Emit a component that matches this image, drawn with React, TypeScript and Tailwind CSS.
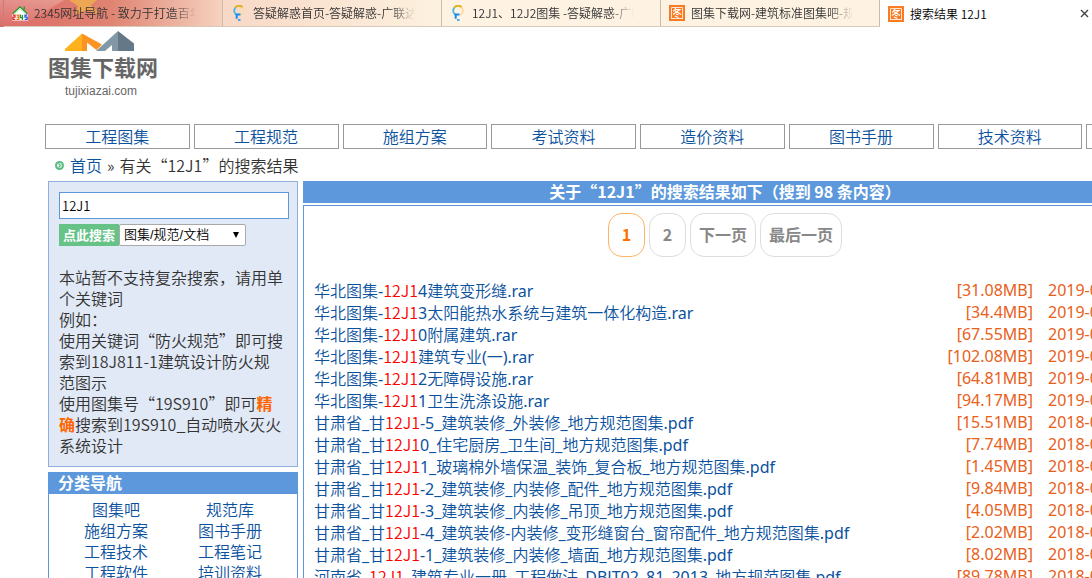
const navItems = ['工程图集', '工程规范', '施组方案', '考试资料', '造价资料', '图书手册', '技术资料', '下载排行'];

const categories = ['图集吧', '规范库', '施组方案', '图书手册', '工程技术', '工程笔记', '工程软件', '培训资料'];

const keyword = '12J1';

const results = [
  { name: '华北图集-12J14建筑变形缝.rar', size: '31.08MB', date: '2019-05-12' },
  { name: '华北图集-12J13太阳能热水系统与建筑一体化构造.rar', size: '34.4MB', date: '2019-05-12' },
  { name: '华北图集-12J10附属建筑.rar', size: '67.55MB', date: '2019-05-12' },
  { name: '华北图集-12J1建筑专业(一).rar', size: '102.08MB', date: '2019-05-12' },
  { name: '华北图集-12J12无障碍设施.rar', size: '64.81MB', date: '2019-05-12' },
  { name: '华北图集-12J11卫生洗涤设施.rar', size: '94.17MB', date: '2019-05-12' },
  { name: '甘肃省_甘12J1-5_建筑装修_外装修_地方规范图集.pdf', size: '15.51MB', date: '2018-08-20' },
  { name: '甘肃省_甘12J10_住宅厨房_卫生间_地方规范图集.pdf', size: '7.74MB', date: '2018-08-20' },
  { name: '甘肃省_甘12J11_玻璃棉外墙保温_装饰_复合板_地方规范图集.pdf', size: '1.45MB', date: '2018-08-20' },
  { name: '甘肃省_甘12J1-2_建筑装修_内装修_配件_地方规范图集.pdf', size: '9.84MB', date: '2018-08-20' },
  { name: '甘肃省_甘12J1-3_建筑装修_内装修_吊顶_地方规范图集.pdf', size: '4.05MB', date: '2018-08-20' },
  { name: '甘肃省_甘12J1-4_建筑装修-内装修_变形缝窗台_窗帘配件_地方规范图集.pdf', size: '2.02MB', date: '2018-08-20' },
  { name: '甘肃省_甘12J1-1_建筑装修_内装修_墙面_地方规范图集.pdf', size: '8.02MB', date: '2018-08-20' },
  { name: '河南省_12J1_建筑专业一册_工程做法_DBJT02_81_2013_地方规范图集.pdf', size: '89.78MB', date: '2018-08-20' },
];

function HouseIcon() {
  return (
    <svg viewBox="0 0 17 16" className="h-4 w-4 shrink-0" aria-hidden="true">
      <path d="M2 10v-3l6.500-5 6.500 5v3z" fill="#fff" />
      <path d="M1 8.500 8.500 1.500 16 8.500M13 1v3.500" fill="none" stroke="#1d9a2b" strokeWidth="1.300" />
      <path d="M3 8.500 8.500 3.500 14 8.500" fill="none" stroke="#9be08a" strokeWidth="1" />
      <rect x="0" y="9.500" width="17" height="6.500" fill="#fff" />
      <g fill="none" strokeWidth="1.300">
        <path d="M.8 10.200h2.400v2.300H.9v2.300h2.500" stroke="#e02020" />
        <path d="M4.700 10.200h2.600v4.600H4.700M5 12.500h2" stroke="#e87818" />
        <path d="M9 9.700v3.300h3M11 10v5.500" stroke="#1f9a38" />
        <path d="M16.300 10.200h-2.500v2.300h2.300v2.300h-2.600" stroke="#2450d0" />
      </g>
    </svg>
  );
}

function SwirlIcon() {
  return (
    <svg viewBox="0 0 16 16" className="h-4 w-4 shrink-0" fill="none" aria-hidden="true">
      <path d="M4.200 2.800A4.700 4.700 0 0 1 11.500 2.200" stroke="#e0b020" strokeWidth="2" />
      <path d="M11.500 2.200a4.700 4.700 0 0 1-1.500 7.600" stroke="#f8dca6" strokeWidth="2" />
      <path d="M4.200 2.800A4.700 4.700 0 0 0 5 9.300" stroke="#4ab8e0" strokeWidth="2" />
      <path d="M4.500 9.500h5M5.700 9v4.700" stroke="#0f8df0" strokeWidth="2" />
      <path d="M7 15h2.500" stroke="#0f8df0" strokeWidth="1.500" />
    </svg>
  );
}

function AtlasIcon() {
  return (
    <svg viewBox="0 0 16 16" className="h-4 w-4 shrink-0" fill="none" aria-hidden="true">
      <rect width="16" height="16" fill="#fb7b22" />
      <path d="M2.500 14V2.500h11V14M2.500 13.500h11" stroke="#fff" strokeOpacity=".8" strokeWidth="1" />
      <path d="M7 3 4.200 6.500M6 4.500h4.800L4 9.500M5.800 5.500l6.200 4M7 9l2.500 1M5.800 11l3.700 1.500" stroke="#fff" strokeWidth="1.200" />
    </svg>
  );
}

const tabs = [
  { icon: <HouseIcon />, title: '2345网址导航 - 致力于打造百年品牌', tint: '' },
  { icon: <SwirlIcon />, title: '答疑解惑首页-答疑解惑-广联达服务', tint: 'bg-linear-to-r from-[#f8d8c6] to-[#fdf1df]' },
  { icon: <SwirlIcon />, title: '12J1、12J2图集 -答疑解惑-广联达', tint: 'bg-[#fef3e2]' },
  { icon: <AtlasIcon />, title: '图集下载网-建筑标准图集吧-规范下载', tint: 'bg-[#fef3e2]' },
];

function TabBar() {
  return (
    <div className="relative isolate flex h-[27px] bg-white text-xs text-[#333]">
      <svg viewBox="0 0 223 27" className="absolute top-0 left-0 -z-10 h-[27px] w-[223px]" aria-hidden="true">
        <defs>
          <linearGradient id="flag">
            <stop offset="0" stopColor="#dc6a66" />
            <stop offset=".5" stopColor="#e08473" />
            <stop offset="1" stopColor="#f6d3c0" />
          </linearGradient>
          <linearGradient id="shine" x2="0" y2="1">
            <stop offset="0" stopColor="#fff" stopOpacity=".25" />
            <stop offset="1" stopColor="#fff" stopOpacity="0" />
          </linearGradient>
        </defs>
        <rect width="223" height="27" fill="url(#flag)" />
        <path d="M69 0h28l-6 5 9 10-13-5-12 5 3-9z" fill="#f0b04c" fillOpacity=".8" />
        <path d="M0 0h64L20 27H0z" fill="url(#shine)" />
      </svg>
      <span className="w-1 border-r border-[#c67f77]" />
      {tabs.map((tab) => (
        <button
          key={tab.title}
          type="button"
          className={`flex w-[219px] shrink-0 items-center gap-1.5 border-r border-b border-r-[#cbbba9] border-b-[#d8c9b8] pl-2 text-left ${tab.tint}`}
        >
          {tab.icon}
          <span className="w-[162px] overflow-hidden whitespace-nowrap [mask-image:linear-gradient(to_right,#000_85%,transparent)]">
            {tab.title}
          </span>
        </button>
      ))}
      <div className="flex min-w-0 flex-1 items-center justify-between bg-white pr-[3px] pl-2 text-black">
        <button type="button" className="flex items-center gap-1.5">
          <AtlasIcon />
          搜索结果 12J1
        </button>
        <button type="button" aria-label="关闭标签页">
          <svg viewBox="0 0 9 9" className="h-[9px] w-[9px]" aria-hidden="true">
            <path d="M1 1l7 7M8 1l-7 7" stroke="#444" strokeWidth="1.400" />
          </svg>
        </button>
      </div>
    </div>
  );
}

function Logo() {
  return (
    <a href="#" className="flex w-28 flex-col text-[#666]">
      <svg viewBox="0 0 70 20" className="ml-[17px] h-5 w-[70px]" aria-hidden="true">
        <path d="M0 20V18L17 2.500V20z" fill="#ffb21c" />
        <path d="M17 2.500 37 13.500 31.500 19 22 11.500V20H17z" fill="#fb9224" />
        <path d="M31 20 53 0V20H47V14L40 20z" fill="#8398a7" />
        <path d="M53 0 69 12.500V20H53z" fill="#657887" />
      </svg>
      <span className="flex h-8 items-center pb-0.5 text-[22px] font-bold whitespace-nowrap">图集下载网</span>
      <span className="ml-[17px] font-['Liberation_Sans',sans-serif] text-xs leading-4 font-normal">tujixiazai.com</span>
    </a>
  );
}

function SearchPanel() {
  return (
    <form className="border border-[#8fb0de] bg-[#e1e9f6] pt-2.5 pr-2 pb-2.5 pl-2.5" onSubmit={(e) => e.preventDefault()}>
      <input
        aria-label="搜索关键词"
        defaultValue={keyword}
        className="mb-[5px] block h-[27px] w-full border border-[#5c98db] bg-white px-0.5 text-[13px] text-black outline-none"
      />
      <div className="mb-[21px] flex h-[22px]">
        <button type="submit" className="w-[60px] bg-[#66c287] text-[13px] leading-[22px] font-bold text-white">
          点此搜索
        </button>
        <div className="relative">
          <select
            aria-label="搜索范围"
            className="block h-[22px] w-[127px] appearance-none rounded-xs border border-[#a9a9a9] bg-white pl-1 font-['Liberation_Sans','Noto_Sans_CJK_SC',sans-serif] text-[13px] leading-5 text-black"
          >
            <option>图集/规范/文档</option>
          </select>
          <svg viewBox="0 0 6 6" className="pointer-events-none absolute top-2 right-[7px] h-1.5 w-1.5" aria-hidden="true">
            <path d="M0 0h6L3 6z" fill="#000" />
          </svg>
        </div>
      </div>
      <p className="pr-[5px] leading-[21px]">
        本站暂不支持复杂搜索，请用单个关键词
        <br />
        例如：
        <br />
        使用关键词“防火规范”即可搜索到18J811-1建筑设计防火规范图示
        <br />
        使用图集号“19S910”即可<strong className="font-bold text-[#ff6600]">精确</strong>搜索到19S910_自动喷水灭火系统设计
      </p>
    </form>
  );
}

function CategoryPanel() {
  return (
    <section className="mt-[5px]">
      <h2 className="bg-[#5c98db] pb-0.5 pl-2.5 leading-5 font-bold text-white">分类导航</h2>
      <div className="grid grid-cols-2 border-x border-b border-[#5c98db] px-2.5 py-[5px] text-center leading-[21px] text-[#0a519e]">
        {categories.map((c) => (
          <a key={c} href="#">
            {c}
          </a>
        ))}
      </div>
    </section>
  );
}

function Pagination() {
  const base = 'flex h-11 items-center justify-center rounded-[14px] border pb-0.5 font-bold';
  return (
    <nav className="flex justify-center gap-1" aria-label="分页">
      <a href="#" aria-current="page" className={`${base} w-[37px] border-[#ffb366] text-[#ff7300]`}>
        1
      </a>
      <a href="#" className={`${base} w-[37px] border-[#ddd] text-[#888]`}>
        2
      </a>
      <a href="#" className={`${base} border-[#ddd] px-2 text-[#888]`}>
        下一页
      </a>
      <a href="#" className={`${base} border-[#ddd] px-2 text-[#888]`}>
        最后一页
      </a>
    </nav>
  );
}

function ResultName({ name }: { name: string }) {
  const [before, after] = name.split(keyword);
  return (
    <a href="#">
      {before}
      <span className="font-['Noto_Sans_CJK_SC_DemiLight','Noto_Sans_CJK_SC',sans-serif] text-[#ff0000]">{keyword}</span>
      {after}
    </a>
  );
}

function Results() {
  return (
    <main className="min-w-[844px] flex-1">
      <h1 className="mb-0.5 bg-[#5c98db] pb-0.5 text-center leading-5 font-bold text-white">
        关于“12J1”的搜索结果如下（搜到 98 条内容）
      </h1>
      <div className="border border-[#5c98db] px-2.5 pt-[7px]">
        <Pagination />
        <table className="mt-[22px] w-full font-['Noto_Sans','Noto_Sans_CJK_SC_DemiLight','Noto_Sans_CJK_SC',sans-serif] font-normal">
          <tbody>
            {results.map((r) => (
              <tr key={r.name} className="h-[22px] leading-5 whitespace-nowrap">
                <td className="p-0 text-[#0a519e]">
                  <ResultName name={r.name} />
                </td>
                <td className="p-0 pr-[15px] text-right text-[#e9601a]">[{r.size}]</td>
                <td className="w-[88px] p-0 text-[#e9601a]">{r.date}</td>
              </tr>
            ))}
          </tbody>
        </table>
      </div>
    </main>
  );
}

export default function App() {
  return (
    <div className="h-screen overflow-hidden bg-white font-['Noto_Sans_CJK_SC',sans-serif] text-base font-[350] text-[#333]">
      <TabBar />
      <header className="h-[97px] pt-1 pl-12">
        <Logo />
      </header>
      <nav className="ml-[45px] grid min-w-[1186px] grid-cols-8 gap-1" aria-label="主导航">
        {navItems.map((item) => (
          <a key={item} href="#" className="border border-[#999] text-center leading-[23px] text-[#0a519e]">
            {item}
          </a>
        ))}
      </nav>
      <div className="flex h-8 items-center gap-1.5 pl-[55px]">
        <svg viewBox="0 0 9 9" className="h-[9px] w-[9px]" aria-hidden="true">
          <circle cx="4.500" cy="4.500" r="4.500" fill="#5cbb80" />
          <circle cx="4.500" cy="4.500" r="2.400" fill="#fff" />
          <path d="M3.500 2.500l2 2-2 2" fill="none" stroke="#5cbb80" strokeWidth="1.300" />
        </svg>
        <div className="flex gap-[5px] whitespace-nowrap">
          <a href="#" className="text-[#0a519e]">
            首页
          </a>
          <span>»</span>
          <span>有关“12J1”的搜索结果</span>
        </div>
      </div>
      <div className="flex min-w-[1147px] items-start gap-[5px] pl-12">
        <aside className="w-[250px] shrink-0">
          <SearchPanel />
          <CategoryPanel />
        </aside>
        <Results />
      </div>
    </div>
  );
}
